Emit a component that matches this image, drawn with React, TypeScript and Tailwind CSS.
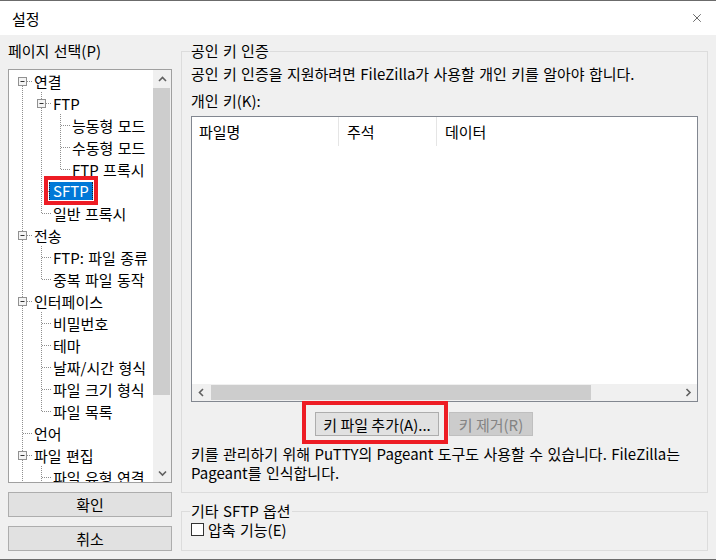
import { X } from "lucide-react";

interface TreeRow {
    label: string;
    level: number;
    guides: boolean[];
    last: boolean;
    box?: boolean;
    first?: boolean;
    selected?: boolean;
}

const rows: TreeRow[] = [
    { label: "연결", level: 0, guides: [], last: false, box: true, first: true },
    { label: "FTP", level: 1, guides: [true], last: false, box: true },
    { label: "능동형 모드", level: 2, guides: [true, true], last: false },
    { label: "수동형 모드", level: 2, guides: [true, true], last: false },
    { label: "FTP 프록시", level: 2, guides: [true, true], last: true },
    { label: "SFTP", level: 1, guides: [true], last: false, selected: true },
    { label: "일반 프록시", level: 1, guides: [true], last: true },
    { label: "전송", level: 0, guides: [], last: false, box: true },
    { label: "FTP: 파일 종류", level: 1, guides: [true], last: false },
    { label: "중복 파일 동작", level: 1, guides: [true], last: true },
    { label: "인터페이스", level: 0, guides: [], last: false, box: true },
    { label: "비밀번호", level: 1, guides: [true], last: false },
    { label: "테마", level: 1, guides: [true], last: false },
    { label: "날짜/시간 형식", level: 1, guides: [true], last: false },
    { label: "파일 크기 형식", level: 1, guides: [true], last: false },
    { label: "파일 목록", level: 1, guides: [true], last: true },
    { label: "언어", level: 0, guides: [], last: false },
    { label: "파일 편집", level: 0, guides: [], last: false, box: true },
    { label: "파일 유형 연결", level: 1, guides: [true], last: false },
];

const DOT = "#8f8f8f";

// one 19x22 column of the tree's connector lines
const GuideCell = ({ on }: { on: boolean }) => (
    <svg width="19" height="22" className="shrink-0">
        {on && <line x1="9.5" y1="0" x2="9.5" y2="22" stroke={DOT} strokeDasharray="1 1" />}
    </svg>
);

const ConnectorCell = ({ row }: { row: TreeRow }) => (
    <svg width="19" height="22" className="shrink-0">
        {!row.first && <line x1="9.5" y1="0" x2="9.5" y2="11" stroke={DOT} strokeDasharray="1 1" />}
        {!row.last && <line x1="9.5" y1="12" x2="9.5" y2="22" stroke={DOT} strokeDasharray="1 1" />}
        <line x1="10" y1="11.5" x2="19" y2="11.5" stroke={DOT} strokeDasharray="1 1" />
        {row.box && (
            <>
                <rect x="5.5" y="7.5" width="8" height="8" fill="#f4f4f4" stroke="#919191" />
                <line x1="7.5" y1="11.5" x2="11.5" y2="11.5" stroke="#333" />
            </>
        )}
    </svg>
);

const Chevron = ({ dir }: { dir: "up" | "down" | "left" | "right" }) => {
    const d = {
        up: "M1 5 L4.5 1.5 L8 5",
        down: "M1 1.5 L4.5 5 L8 1.5",
        left: "M5 1 L1.5 4.5 L5 8",
        right: "M1.5 1 L5 4.5 L1.5 8",
    }[dir];
    const vertical = dir === "up" || dir === "down";
    return (
        <svg width={vertical ? 9 : 7} height={vertical ? 7 : 9}>
            <path d={d} fill="none" stroke="#606060" strokeWidth="1.6" />
        </svg>
    );
};

const PageTree = () => (
    <div className="flex h-[414px] border border-[#a0a0a0] bg-white">
        <div className="flex-1 overflow-hidden pl-[4px]">
            {rows.map((row) => (
                <div key={row.label} className="flex h-[22px] items-center">
                    {row.guides.map((on, i) => (
                        <GuideCell key={i} on={on} />
                    ))}
                    <ConnectorCell row={row} />
                    {row.selected ? (
                        <span className="relative ml-[-2px] h-[18px] border-x border-dotted border-[#222] bg-[#0078d7] px-[3px] leading-[18px] text-white">
                            {row.label}
                            <span className="absolute -top-[6px] -right-[6px] -bottom-[5px] -left-[6px] border-4 border-[#ed1c24]" />
                        </span>
                    ) : (
                        <span className="ml-[-2px] whitespace-nowrap px-[4px]">{row.label}</span>
                    )}
                </div>
            ))}
        </div>
        <div className="flex w-[18px] flex-col bg-[#f0f0f0]">
            <div className="flex h-[18px] items-center justify-center">
                <Chevron dir="up" />
            </div>
            <div className="mr-[1px] h-[307px] bg-[#cdcdcd]" />
            <div className="flex-1" />
            <div className="flex h-[18px] items-center justify-center">
                <Chevron dir="down" />
            </div>
        </div>
    </div>
);

const KeyList = () => (
    <div className="mx-[9px] mt-[6px] flex h-[286px] flex-col border border-[#828790] bg-white">
        <div className="flex h-[29px] items-center">
            <div className="flex h-full w-[147px] items-center border-r border-[#e5e5e5] pl-[7px]">파일명</div>
            <div className="flex h-full w-[98px] items-center border-r border-[#e5e5e5] pl-[8px]">주석</div>
            <div className="flex h-full flex-1 items-center pl-[8px]">데이터</div>
        </div>
        <div className="flex-1" />
        <div className="flex h-[17px] bg-[#f0f0f0]">
            <div className="flex w-[19px] items-center justify-center">
                <Chevron dir="left" />
            </div>
            <div className="my-[1px] w-[380px] bg-[#cdcdcd]" />
            <div className="flex-1" />
            <div className="flex w-[18px] items-center justify-center">
                <Chevron dir="right" />
            </div>
        </div>
    </div>
);

export default function App() {
    return (
        <div className="flex h-[560px] w-[716px] flex-col border-y border-[#6b6b6b] font-['Noto_Sans_CJK_KR',sans-serif] text-[15px] leading-[19px] text-black [word-spacing:1px]">
            {/* title bar */}
            <div className="flex h-[34px] shrink-0 items-center justify-between bg-white pl-[12px] pr-[12px]">
                <span>설정</span>
                <X size={14} strokeWidth={1} className="text-black" />
            </div>

            <div className="flex flex-1 bg-[#f0f0f0] pl-[8px]">
                {/* left column */}
                <div className="flex w-[164px] flex-col">
                    <div className="mt-[7px] h-[18px] leading-[18px]">페이지 선택(P)</div>
                    <div className="mt-[9px]">
                        <PageTree />
                    </div>
                    <button className="mt-[9px] h-[25px] border border-[#adadad] bg-[#e1e1e1]">확인</button>
                    <button className="mt-[9px] h-[25px] border border-[#adadad] bg-[#e1e1e1]">취소</button>
                </div>

                {/* right column */}
                <div className="ml-[9px] flex w-[527px] flex-col pt-[7px]">
                    <fieldset className="min-w-0 border border-[#dcdcdc] pb-[10px]">
                        <legend className="ml-[8px] px-[1px] leading-[18px]">공인 키 인증</legend>
                        <p className="mt-[4px] pl-[9px]">공인 키 인증을 지원하려면 FileZilla가 사용할 개인 키를 알아야 합니다.</p>
                        <p className="mt-[8px] pl-[9px]">개인 키(K):</p>
                        <KeyList />
                        <div className="mt-[10px] flex pl-[133px]">
                            <div className="relative">
                                <button className="h-[24px] w-[124px] border border-[#adadad] bg-[#e1e1e1]">키 파일 추가(A)...</button>
                                <span className="absolute -top-[11px] -right-[9px] -bottom-[8px] -left-[13px] border-4 border-[#ed1c24]" />
                            </div>
                            <button className="ml-[10px] h-[24px] w-[84px] border border-[#bfbfbf] bg-[#cccccc] text-[#838383]">키 제거(R)</button>
                        </div>
                        <p className="mt-[8px] whitespace-nowrap pl-[9px]">
                            키를 관리하기 위해 PuTTY의 Pageant 도구도 사용할 수 있습니다. FileZilla는
                            <br />
                            Pageant를 인식합니다.
                        </p>
                    </fieldset>

                    <fieldset className="mt-[9px] min-w-0 border border-[#dcdcdc] pb-[11px]">
                        <legend className="ml-[8px] px-[1px] leading-[18px]">기타 SFTP 옵션</legend>
                        <label className="flex items-center pl-[9px]">
                            <span className="h-[13px] w-[13px] border border-[#333] bg-white" />
                            <span className="ml-[4px]">압축 기능(E)</span>
                        </label>
                    </fieldset>
                </div>
            </div>
        </div>
    );
}
